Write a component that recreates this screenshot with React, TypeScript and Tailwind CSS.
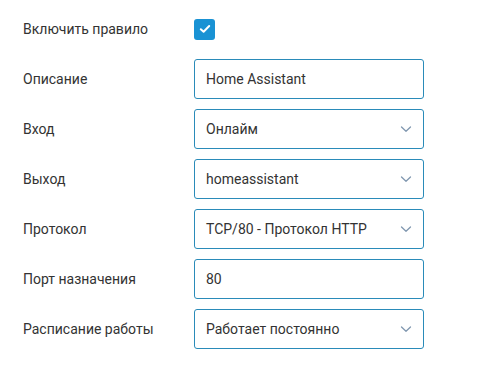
import React from "react";

const Chevron = () => (
  <svg width="12" height="8" viewBox="0 0 12 8" className="absolute right-[11px] top-1/2 -translate-y-1/2">
    <path d="M1.5 2 L6 6.2 L10.5 2" fill="none" stroke="#8198b0" strokeWidth="1.3" strokeLinecap="round" strokeLinejoin="round" />
  </svg>
);

const Field = ({ value, select }: { value: string; select?: boolean }) => (
  <div className="relative flex h-[40px] w-[230px] items-center rounded-[3px] border border-[#2a8bb9] bg-white pl-[11px] text-[14px] text-[#333]">
    {value}
    {select && <Chevron />}
  </div>
);

const Row = ({ label, children }: { label: string; children: React.ReactNode }) => (
  <div className="flex h-[40px] items-center">
    <div className="w-[171px] text-[14px] text-[#333]">{label}</div>
    {children}
  </div>
);

export default function App() {
  return (
    <div className="h-[372px] w-[497px] bg-white pl-[23px] pt-[9px]" style={{ fontFamily: "Roboto, sans-serif" }}>
      <div className="flex flex-col gap-[10px]">
        <Row label="Включить правило">
          <div className="flex h-[21px] w-[21px] items-center justify-center rounded-[3px] bg-[#1992d4]">
            <svg width="12" height="10" viewBox="0 0 12 10">
              <path d="M1.8 5.2 L4.6 7.8 L10.2 2" fill="none" stroke="white" strokeWidth="2" strokeLinecap="round" strokeLinejoin="round" />
            </svg>
          </div>
        </Row>
        <Row label="Описание">
          <Field value="Home Assistant" />
        </Row>
        <Row label="Вход">
          <Field value="Онлайм" select />
        </Row>
        <Row label="Выход">
          <Field value="homeassistant" select />
        </Row>
        <Row label="Протокол">
          <Field value="TCP/80 - Протокол HTTP" select />
        </Row>
        <Row label="Порт назначения">
          <Field value="80" />
        </Row>
        <Row label="Расписание работы">
          <Field value="Работает постоянно" select />
        </Row>
      </div>
    </div>
  );
}
